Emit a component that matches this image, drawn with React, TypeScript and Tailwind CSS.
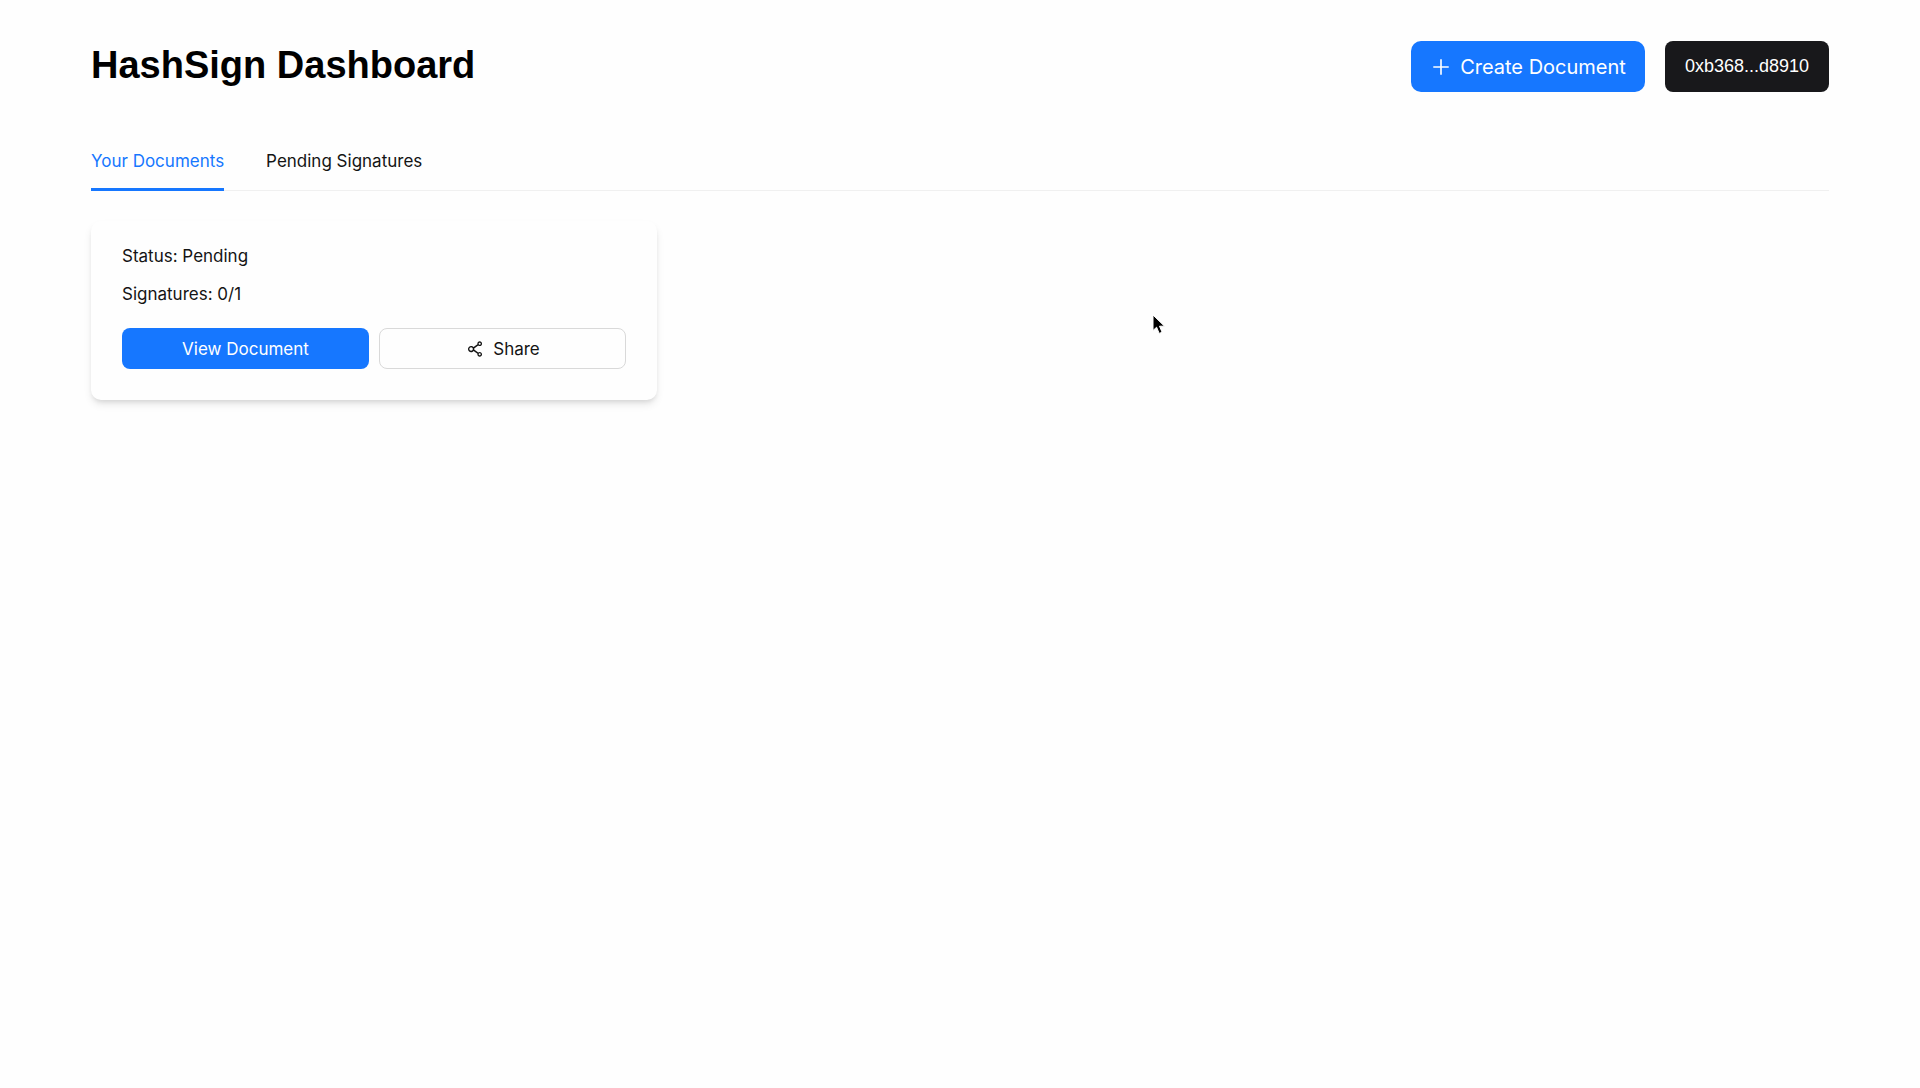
import { AiOutlinePlus, AiOutlineShareAlt } from "react-icons/ai";

function Header() {
  return (
    <header className="flex items-start justify-between">
      <h1 className="font-['Liberation_Sans',sans-serif] text-[38px] leading-[48px] font-bold text-black">
        HashSign Dashboard
      </h1>
      <div className="flex gap-5">
        <button
          type="button"
          className="flex h-[51px] items-center gap-2 rounded-[10px] bg-[#1677ff] px-[19px] text-[20px] text-white"
        >
          <AiOutlinePlus className="size-[22px]" aria-hidden="true" />
          Create Document
        </button>
        <button
          type="button"
          className="h-[51px] rounded-lg bg-[#18181b] px-5 font-['Liberation_Sans',sans-serif] text-[18px] text-white"
        >
          0xb368...d8910
        </button>
      </div>
    </header>
  );
}

function Tabs() {
  return (
    <div
      role="tablist"
      className="mt-[55px] flex items-start gap-[42px] border-b border-[#f0f0f0] text-[17px] leading-7"
    >
      <button
        type="button"
        role="tab"
        aria-selected="true"
        className="-mb-px border-b-3 border-[#1677ff] pb-[13px] text-[#1677ff]"
      >
        Your Documents
      </button>
      <button type="button" role="tab" aria-selected="false">
        Pending Signatures
      </button>
    </div>
  );
}

function DocumentCard() {
  return (
    <article className="rounded-[10px] bg-[#fefefe] p-[31px] pt-[21px] text-[17px] leading-7 shadow-[0_5px_8px_-1px_rgba(0,0,0,0.1),0_3px_5px_-2px_rgba(0,0,0,0.1)]">
      <p>Status: Pending</p>
      <p className="mt-[10px]">Signatures: 0/1</p>
      <div className="mt-5 grid grid-cols-2 gap-[10px]">
        <button type="button" className="h-[41px] rounded-lg bg-[#1677ff] text-white">
          View Document
        </button>
        <button
          type="button"
          className="flex h-[41px] items-center justify-center gap-2 rounded-lg border border-[#d9d9d9]"
        >
          <AiOutlineShareAlt className="size-5" aria-hidden="true" />
          Share
        </button>
      </div>
    </article>
  );
}

function Pointer() {
  return (
    <svg
      className="pointer-events-none absolute top-[313px] left-[1151px] h-6 w-4"
      viewBox="0 0 16 24"
      aria-hidden="true"
    >
      <path
        d="M2 2v15.5l3.6-3.3 2.6 6.2 2.9-1.2-2.6-6H13.5z"
        fill="#000"
        stroke="#fff"
        strokeWidth="1"
      />
    </svg>
  );
}

export default function App() {
  return (
    <div className="relative min-h-screen bg-[#fefefe] px-[91px] pt-[41px] font-['Inter',sans-serif] text-[#141414]">
      <Header />
      <Tabs />
      <main className="mt-[30px] grid grid-cols-3 gap-5">
        <DocumentCard />
      </main>
      <Pointer />
    </div>
  );
}
